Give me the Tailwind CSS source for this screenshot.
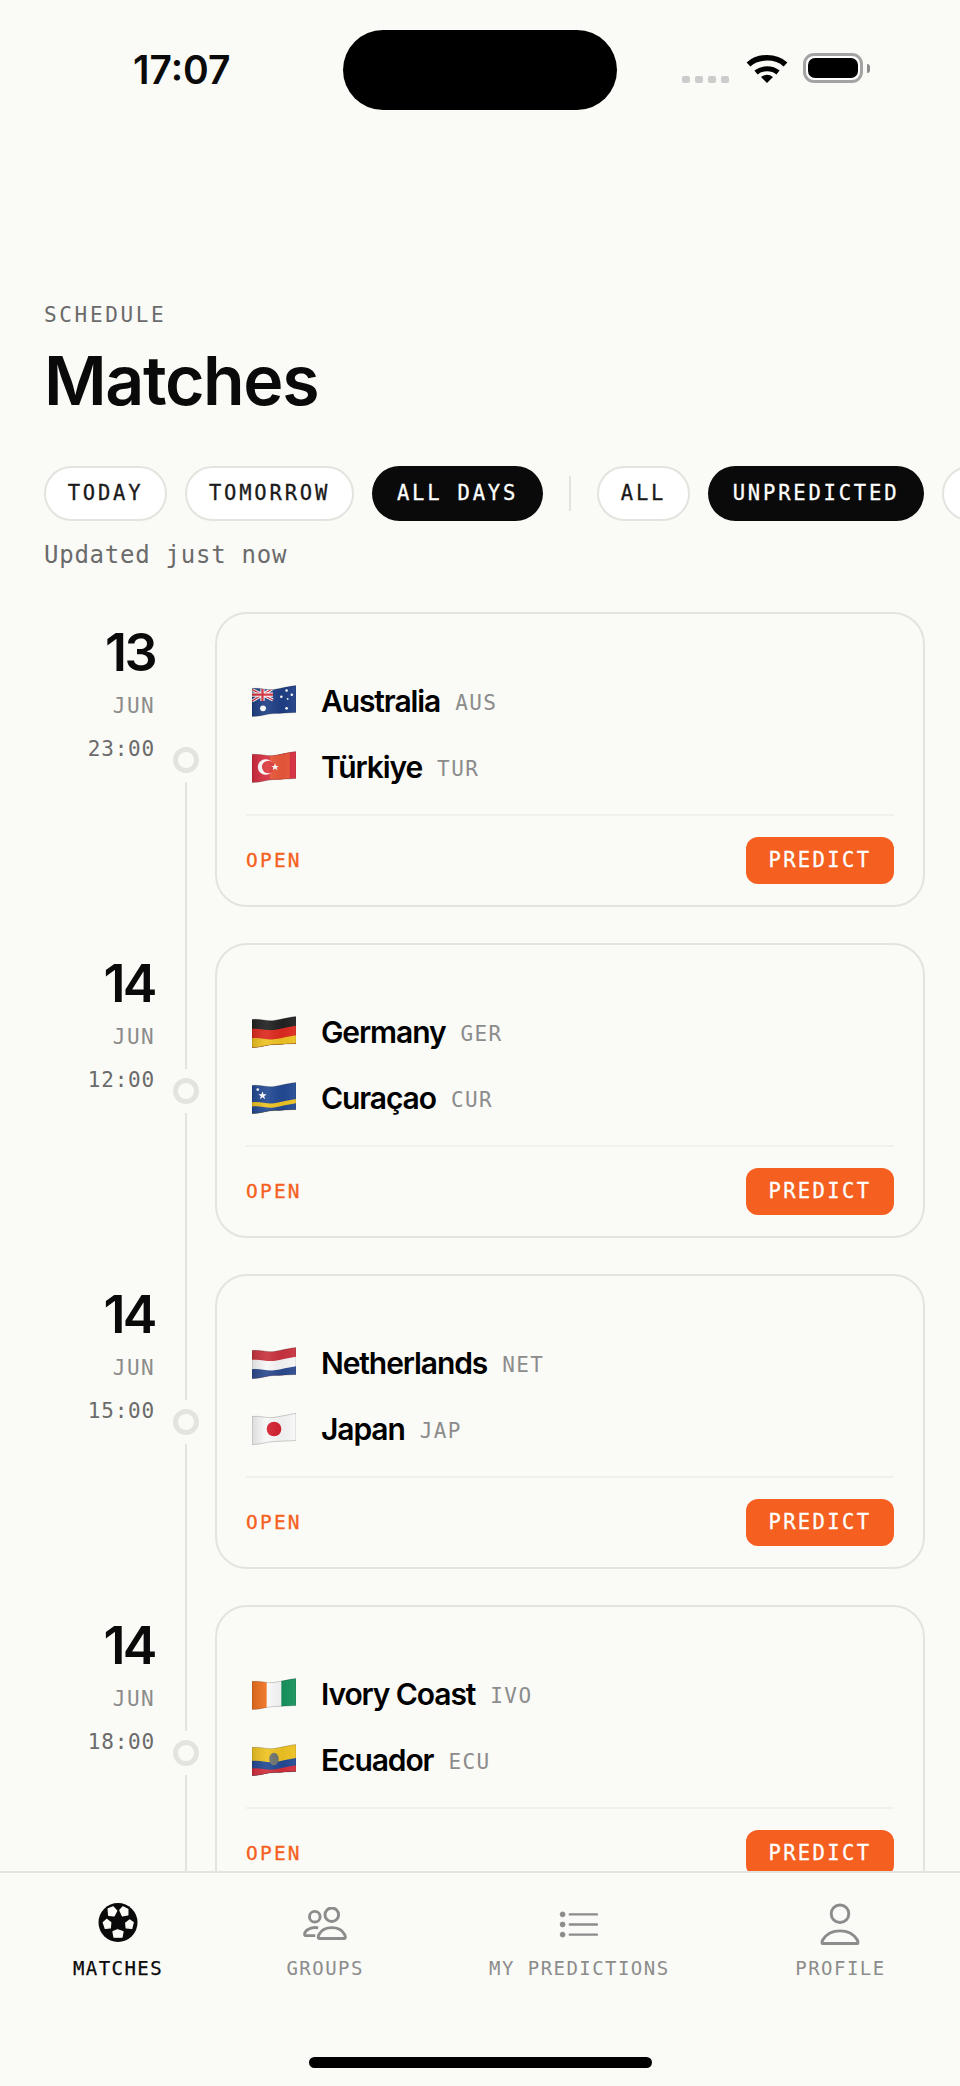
<!DOCTYPE html>
<html lang="en">
<head>
    <meta charset="UTF-8">
    <meta name="viewport" content="width=device-width, initial-scale=1.0">
    <title>Matches</title>
    <script src="https://cdn.jsdelivr.net/npm/@tailwindcss/browser@4"></script>
</head>
<body class="bg-[#fafaf6]">
    <!-- shared flag shape -->
    <svg class="absolute w-0 h-0">
        <defs>
            <path id="wave" d="M0 3C8 2 14 5 21 4S35 1 42 0V40H0Z"/>
            <clipPath id="flag"><path d="M0 3C8 2 14 5 21 4S35 1 42 0V26C35 26 28 27 21 27S8 30 0 30Z"/></clipPath>
            <linearGradient id="shade" x1="0" x2="1" y1="0" y2="0">
                <stop offset="0" stop-color="#000" stop-opacity=".12"/>
                <stop offset=".35" stop-color="#fff" stop-opacity=".08"/>
                <stop offset=".7" stop-color="#000" stop-opacity=".04"/>
                <stop offset="1" stop-color="#fff" stop-opacity=".06"/>
            </linearGradient>
            <g id="edge">
                <rect width="42" height="30" fill="url(#shade)" clip-path="url(#flag)"/>
                <path d="M0 3C8 2 14 5 21 4S35 1 42 0V26C35 26 28 27 21 27S8 30 0 30Z" fill="none" stroke="#000" stroke-opacity=".22" stroke-width=".8"/>
            </g>
        </defs>
    </svg>

    <div class="w-[960px] h-[2086px] flex flex-col overflow-hidden text-[#0a0a0a] font-['Inter',sans-serif]">
        <!-- status bar -->
        <div class="h-[130px] shrink-0 pt-[30px] pl-[133px] flex items-start">
            <div class="w-[210px] pt-[17px] text-[39px] leading-[46px] font-semibold">17:07</div>
            <div class="w-[274px] h-[80px] rounded-[40px] bg-black"></div>
            <div class="ml-[65px] flex gap-[5px] mt-[46px]">
                <span class="w-[8px] h-[7px] rounded-[2px] bg-[#cccccc]"></span>
                <span class="w-[8px] h-[7px] rounded-[2px] bg-[#cccccc]"></span>
                <span class="w-[8px] h-[7px] rounded-[2px] bg-[#cccccc]"></span>
                <span class="w-[8px] h-[7px] rounded-[2px] bg-[#cccccc]"></span>
            </div>
            <svg class="ml-[17px] mt-[23px]" width="42" height="30" viewBox="0 0 42 30">
                <path d="M2.5 11.5C12 2.500 30 2.500 39.500 11.500" fill="none" stroke="#000" stroke-width="5.500"/>
                <path d="M10 19.500C16 14.500 26 14.500 32 19.500" fill="none" stroke="#000" stroke-width="5"/>
                <path d="M15 24Q21 19.500 27 24L21 30Z" fill="#000"/>
            </svg>
            <div class="ml-[15px] mt-[23px] w-[60px] h-[30px] rounded-[11px] border-[3px] border-[#a3a3a3] p-[2px] bg-white">
                <div class="w-full h-full rounded-[7px] bg-black"></div>
            </div>
            <div class="ml-[4px] mt-[34px] w-[3px] h-[9px] rounded-r-[3px] bg-[#8c8c8c]"></div>
        </div>

        <!-- header -->
        <div class="shrink-0 pl-[44px] pt-[173px]">
            <div class="font-['DejaVu_Sans_Mono',monospace] text-[21px] leading-[24px] tracking-[2.65px] text-[#6b6b6b]">SCHEDULE</div>
            <h1 class="mt-[17px] text-[68px] leading-[72px] font-semibold tracking-[-1.4px] text-[#0a0a0a]">Matches</h1>
            <div class="mt-[50px] flex items-center gap-[18px] font-['DejaVu_Sans_Mono',monospace] text-[20.5px] tracking-[2.8px] whitespace-nowrap [-webkit-text-stroke:0.3px]">
                <button class="w-[123px] h-[55px] shrink-0 rounded-full border-2 border-[#e4e4df] bg-white text-[#1a1a1a]">TODAY</button>
                <button class="w-[169px] h-[55px] shrink-0 rounded-full border-2 border-[#e4e4df] bg-white text-[#1a1a1a]">TOMORROW</button>
                <button class="w-[171px] h-[55px] shrink-0 rounded-full bg-[#0a0a0a] text-white">ALL DAYS</button>
                <span class="w-[2px] h-[35px] shrink-0 mx-[8px] bg-[#e4e4df]"></span>
                <button class="w-[93px] h-[55px] shrink-0 rounded-full border-2 border-[#e4e4df] bg-white text-[#1a1a1a]">ALL</button>
                <button class="w-[216px] h-[55px] shrink-0 rounded-full bg-[#0a0a0a] text-white">UNPREDICTED</button>
                <span class="w-[170px] h-[55px] shrink-0 rounded-full border-2 border-[#e4e4df] bg-white"></span>
            </div>
            <div class="mt-[20px] font-['DejaVu_Sans_Mono',monospace] text-[24px] leading-[28px] tracking-[0.75px] text-[#6b6b6b]">Updated just now</div>
        </div>

        <!-- match timeline -->
        <main class="mt-[43px] flex-1 min-h-0 overflow-hidden pl-[44px] pr-[35px] flex flex-col gap-[36px]">

            <div class="flex shrink-0">
                <div class="w-[111px] shrink-0 flex flex-col items-end">
                    <div class="mt-[14px] text-[52px] leading-[54px] font-semibold tracking-[-2.5px]">13</div>
                    <div class="mt-[14px] font-['DejaVu_Sans_Mono',monospace] text-[21px] leading-[24px] tracking-[1.4px] text-[#8c8c8c]">JUN</div>
                    <div class="mt-[19px] font-['DejaVu_Sans_Mono',monospace] text-[21px] leading-[24px] tracking-[0.8px] text-[#6b6b6b]">23:00</div>
                </div>
                <div class="w-[60px] shrink-0 pl-[1px] flex flex-col items-center">
                    <span class="mt-[135px] w-[26px] h-[26px] shrink-0 rounded-full border-[5px] border-[#e4e4df]"></span>
                    <span class="mt-[9px] mb-[-162px] w-[2px] flex-1 bg-[#e4e4df]"></span>
                </div>
                <div class="flex-1 h-[295px] rounded-[32px] border-2 border-[#e4e4df] pt-[69px] px-[29px]">
                    <div class="flex items-center h-[36px] pl-[6px]">
                        <svg class="shrink-0" width="44" height="32" viewBox="0 0 42 30">
                            <g clip-path="url(#flag)">
                                <rect width="42" height="30" fill="#1f3f86"/>
                                <path d="M0 4L20 14M20 3L0 15" stroke="#fff" stroke-width="3"/>
                                <path d="M0 4L20 14M20 3L0 15" stroke="#d42e3c" stroke-width="1.200"/>
                                <path d="M10 3V15M0 9H20" stroke="#fff" stroke-width="4"/>
                                <path d="M10 3V15M0 9H20" stroke="#d42e3c" stroke-width="2.200"/>
                                <circle cx="10.500" cy="22" r="2.800" fill="#fff"/>
                                <circle cx="33" cy="5" r="1.200" fill="#fff"/>
                                <circle cx="28" cy="11" r="1.200" fill="#fff"/>
                                <circle cx="38" cy="9" r="1.200" fill="#fff"/>
                                <circle cx="34" cy="13" r=".9" fill="#fff"/>
                                <circle cx="33" cy="22" r="1.300" fill="#fff"/>
                            </g>
                            <use href="#edge"/>
                        </svg>
                        <span class="ml-[25px] text-[30px] leading-[36px] font-semibold tracking-[-1.1px] text-black">Australia</span>
                        <span class="ml-[15px] mt-[6px] font-['DejaVu_Sans_Mono',monospace] text-[21px] tracking-[1.4px] text-[#8c8c8c]">AUS</span>
                    </div>
                    <div class="flex items-center h-[36px] mt-[30px] pl-[6px]">
                        <svg class="shrink-0" width="44" height="32" viewBox="0 0 42 30">
                            <g clip-path="url(#flag)">
                                <rect width="42" height="30" fill="#d62d3f"/>
                                <rect x="17" width="19" height="30" fill="#e9583a"/>
                                <circle cx="13" cy="15" r="7.500" fill="#fff"/>
                                <circle cx="15.500" cy="15" r="6" fill="#dc3a3d"/>
                                <path d="M22 11.500L23 14H25.600L23.500 15.500L24.300 18L22 16.500L19.700 18L20.500 15.500L18.400 14H21Z" fill="#fff"/>
                            </g>
                            <use href="#edge"/>
                        </svg>
                        <span class="ml-[25px] text-[30px] leading-[36px] font-semibold tracking-[-1.1px] text-black">Türkiye</span>
                        <span class="ml-[15px] mt-[6px] font-['DejaVu_Sans_Mono',monospace] text-[21px] tracking-[1.4px] text-[#8c8c8c]">TUR</span>
                    </div>
                    <div class="mt-[29px] h-[2px] bg-[#f0f0ec]"></div>
                    <div class="pt-[21px] flex items-center justify-between">
                        <span class="font-['DejaVu_Sans_Mono',monospace] text-[19.5px] tracking-[2.2px] [-webkit-text-stroke:0.3px] text-[#f55f20]">OPEN</span>
                        <button class="w-[148px] h-[47px] rounded-[12px] bg-[#f55f20] text-white font-['DejaVu_Sans_Mono',monospace] text-[20.5px] tracking-[2.4px] [-webkit-text-stroke:0.3px]">PREDICT</button>
                    </div>
                </div>
            </div>

            <div class="flex shrink-0">
                <div class="w-[111px] shrink-0 flex flex-col items-end">
                    <div class="mt-[14px] text-[52px] leading-[54px] font-semibold tracking-[-2.5px]">14</div>
                    <div class="mt-[14px] font-['DejaVu_Sans_Mono',monospace] text-[21px] leading-[24px] tracking-[1.4px] text-[#8c8c8c]">JUN</div>
                    <div class="mt-[19px] font-['DejaVu_Sans_Mono',monospace] text-[21px] leading-[24px] tracking-[0.8px] text-[#6b6b6b]">12:00</div>
                </div>
                <div class="w-[60px] shrink-0 pl-[1px] flex flex-col items-center">
                    <span class="mt-[135px] w-[26px] h-[26px] shrink-0 rounded-full border-[5px] border-[#e4e4df]"></span>
                    <span class="mt-[9px] mb-[-162px] w-[2px] flex-1 bg-[#e4e4df]"></span>
                </div>
                <div class="flex-1 h-[295px] rounded-[32px] border-2 border-[#e4e4df] pt-[69px] px-[29px]">
                    <div class="flex items-center h-[36px] pl-[6px]">
                        <svg class="shrink-0" width="44" height="32" viewBox="0 0 42 30">
                            <g clip-path="url(#flag)">
                                <rect width="42" height="30" fill="#222222"/>
                                <use href="#wave" y="9" fill="#de2a1f"/>
                                <use href="#wave" y="18" fill="#eec322"/>
                            </g>
                            <use href="#edge"/>
                        </svg>
                        <span class="ml-[25px] text-[30px] leading-[36px] font-semibold tracking-[-1.1px] text-black">Germany</span>
                        <span class="ml-[15px] mt-[6px] font-['DejaVu_Sans_Mono',monospace] text-[21px] tracking-[1.4px] text-[#8c8c8c]">GER</span>
                    </div>
                    <div class="flex items-center h-[36px] mt-[30px] pl-[6px]">
                        <svg class="shrink-0" width="44" height="32" viewBox="0 0 42 30">
                            <g clip-path="url(#flag)">
                                <rect width="42" height="30" fill="#234a94"/>
                                <use href="#wave" y="16" fill="#eec322"/>
                                <use href="#wave" y="20" fill="#234a94"/>
                                <path d="M10 8.500L11 11.500H14L11.600 13.300L12.500 16.200L10 14.400L7.500 16.200L8.400 13.300L6 11.500H9Z" fill="#fff"/>
                                <circle cx="5.500" cy="7" r="1.300" fill="#fff"/>
                            </g>
                            <use href="#edge"/>
                        </svg>
                        <span class="ml-[25px] text-[30px] leading-[36px] font-semibold tracking-[-1.1px] text-black">Curaçao</span>
                        <span class="ml-[15px] mt-[6px] font-['DejaVu_Sans_Mono',monospace] text-[21px] tracking-[1.4px] text-[#8c8c8c]">CUR</span>
                    </div>
                    <div class="mt-[29px] h-[2px] bg-[#f0f0ec]"></div>
                    <div class="pt-[21px] flex items-center justify-between">
                        <span class="font-['DejaVu_Sans_Mono',monospace] text-[19.5px] tracking-[2.2px] [-webkit-text-stroke:0.3px] text-[#f55f20]">OPEN</span>
                        <button class="w-[148px] h-[47px] rounded-[12px] bg-[#f55f20] text-white font-['DejaVu_Sans_Mono',monospace] text-[20.5px] tracking-[2.4px] [-webkit-text-stroke:0.3px]">PREDICT</button>
                    </div>
                </div>
            </div>

            <div class="flex shrink-0">
                <div class="w-[111px] shrink-0 flex flex-col items-end">
                    <div class="mt-[14px] text-[52px] leading-[54px] font-semibold tracking-[-2.5px]">14</div>
                    <div class="mt-[14px] font-['DejaVu_Sans_Mono',monospace] text-[21px] leading-[24px] tracking-[1.4px] text-[#8c8c8c]">JUN</div>
                    <div class="mt-[19px] font-['DejaVu_Sans_Mono',monospace] text-[21px] leading-[24px] tracking-[0.8px] text-[#6b6b6b]">15:00</div>
                </div>
                <div class="w-[60px] shrink-0 pl-[1px] flex flex-col items-center">
                    <span class="mt-[135px] w-[26px] h-[26px] shrink-0 rounded-full border-[5px] border-[#e4e4df]"></span>
                    <span class="mt-[9px] mb-[-162px] w-[2px] flex-1 bg-[#e4e4df]"></span>
                </div>
                <div class="flex-1 h-[295px] rounded-[32px] border-2 border-[#e4e4df] pt-[69px] px-[29px]">
                    <div class="flex items-center h-[36px] pl-[6px]">
                        <svg class="shrink-0" width="44" height="32" viewBox="0 0 42 30">
                            <g clip-path="url(#flag)">
                                <rect width="42" height="30" fill="#c8333f"/>
                                <use href="#wave" y="9" fill="#f7f7f7"/>
                                <use href="#wave" y="18" fill="#2c4a8e"/>
                            </g>
                            <use href="#edge"/>
                        </svg>
                        <span class="ml-[25px] text-[30px] leading-[36px] font-semibold tracking-[-1.1px] text-black">Netherlands</span>
                        <span class="ml-[15px] mt-[6px] font-['DejaVu_Sans_Mono',monospace] text-[21px] tracking-[1.4px] text-[#8c8c8c]">NET</span>
                    </div>
                    <div class="flex items-center h-[36px] mt-[30px] pl-[6px]">
                        <svg class="shrink-0" width="44" height="32" viewBox="0 0 42 30">
                            <g clip-path="url(#flag)">
                                <rect width="42" height="30" fill="#f8f8f8"/>
                                <circle cx="21" cy="15" r="7" fill="#d3202f"/>
                            </g>
                            <use href="#edge"/>
                        </svg>
                        <span class="ml-[25px] text-[30px] leading-[36px] font-semibold tracking-[-1.1px] text-black">Japan</span>
                        <span class="ml-[15px] mt-[6px] font-['DejaVu_Sans_Mono',monospace] text-[21px] tracking-[1.4px] text-[#8c8c8c]">JAP</span>
                    </div>
                    <div class="mt-[29px] h-[2px] bg-[#f0f0ec]"></div>
                    <div class="pt-[21px] flex items-center justify-between">
                        <span class="font-['DejaVu_Sans_Mono',monospace] text-[19.5px] tracking-[2.2px] [-webkit-text-stroke:0.3px] text-[#f55f20]">OPEN</span>
                        <button class="w-[148px] h-[47px] rounded-[12px] bg-[#f55f20] text-white font-['DejaVu_Sans_Mono',monospace] text-[20.5px] tracking-[2.4px] [-webkit-text-stroke:0.3px]">PREDICT</button>
                    </div>
                </div>
            </div>

            <div class="flex shrink-0">
                <div class="w-[111px] shrink-0 flex flex-col items-end">
                    <div class="mt-[14px] text-[52px] leading-[54px] font-semibold tracking-[-2.5px]">14</div>
                    <div class="mt-[14px] font-['DejaVu_Sans_Mono',monospace] text-[21px] leading-[24px] tracking-[1.4px] text-[#8c8c8c]">JUN</div>
                    <div class="mt-[19px] font-['DejaVu_Sans_Mono',monospace] text-[21px] leading-[24px] tracking-[0.8px] text-[#6b6b6b]">18:00</div>
                </div>
                <div class="w-[60px] shrink-0 pl-[1px] flex flex-col items-center">
                    <span class="mt-[135px] w-[26px] h-[26px] shrink-0 rounded-full border-[5px] border-[#e4e4df]"></span>
                    <span class="mt-[9px] mb-[-162px] w-[2px] flex-1 bg-[#e4e4df]"></span>
                </div>
                <div class="flex-1 h-[295px] rounded-[32px] border-2 border-[#e4e4df] pt-[69px] px-[29px]">
                    <div class="flex items-center h-[36px] pl-[6px]">
                        <svg class="shrink-0" width="44" height="32" viewBox="0 0 42 30">
                            <g clip-path="url(#flag)">
                                <rect width="42" height="30" fill="#f8f8f8"/>
                                <rect width="14" height="30" fill="#f0701f"/>
                                <rect x="28" width="14" height="30" fill="#17935e"/>
                            </g>
                            <use href="#edge"/>
                        </svg>
                        <span class="ml-[25px] text-[30px] leading-[36px] font-semibold tracking-[-1.1px] text-black">Ivory Coast</span>
                        <span class="ml-[15px] mt-[6px] font-['DejaVu_Sans_Mono',monospace] text-[21px] tracking-[1.4px] text-[#8c8c8c]">IVO</span>
                    </div>
                    <div class="flex items-center h-[36px] mt-[30px] pl-[6px]">
                        <svg class="shrink-0" width="44" height="32" viewBox="0 0 42 30">
                            <g clip-path="url(#flag)">
                                <rect width="42" height="30" fill="#eec322"/>
                                <use href="#wave" y="13" fill="#234a94"/>
                                <use href="#wave" y="20" fill="#d42e3c"/>
                                <ellipse cx="21" cy="14" rx="4.500" ry="6" fill="#6f7470"/>
                            </g>
                            <use href="#edge"/>
                        </svg>
                        <span class="ml-[25px] text-[30px] leading-[36px] font-semibold tracking-[-1.1px] text-black">Ecuador</span>
                        <span class="ml-[15px] mt-[6px] font-['DejaVu_Sans_Mono',monospace] text-[21px] tracking-[1.4px] text-[#8c8c8c]">ECU</span>
                    </div>
                    <div class="mt-[29px] h-[2px] bg-[#f0f0ec]"></div>
                    <div class="pt-[21px] flex items-center justify-between">
                        <span class="font-['DejaVu_Sans_Mono',monospace] text-[19.5px] tracking-[2.2px] [-webkit-text-stroke:0.3px] text-[#f55f20]">OPEN</span>
                        <button class="w-[148px] h-[47px] rounded-[12px] bg-[#f55f20] text-white font-['DejaVu_Sans_Mono',monospace] text-[20.5px] tracking-[2.4px] [-webkit-text-stroke:0.3px]">PREDICT</button>
                    </div>
                </div>
            </div>
        </main>

        <!-- bottom nav -->
        <nav class="h-[215px] shrink-0 border-t-2 border-[#e4e4df] flex flex-col">
            <div class="h-[107px] pl-[73px] pr-[74px] flex justify-between font-['DejaVu_Sans_Mono',monospace] text-[19px] leading-[24px] tracking-[1.45px] text-[#8c8c8c] whitespace-nowrap">
                <a class="w-[90px] flex flex-col items-center text-[#0a0a0a] [-webkit-text-stroke:0.25px]">
                    <svg class="mt-[30px]" width="40" height="40" viewBox="0 0 40 40">
                        <circle cx="20" cy="20" r="20" fill="#0a0a0a"/>
                        <g fill="#fafaf6" stroke="#fafaf6" stroke-width="1.500" stroke-linejoin="round">
                            <path d="M10 6L15 4L18.500 8L16 13L10.500 12.500Z"/>
                            <path d="M22 7.500L25 4L30 6.500L30 12L24.500 13Z"/>
                            <path d="M5 20L8.500 17L12.500 20L12 25.500L7 26Z"/>
                            <path d="M28 20.500L32 17.500L35.500 20L34 26L28.500 25.500Z"/>
                            <path d="M15 29.500L19.500 27.500L25 29.500L24 35L16 35Z"/>
                        </g>
                    </svg>
                    <span class="mt-[14px]">MATCHES</span>
                </a>
                <a class="w-[77px] flex flex-col items-center">
                    <svg class="mt-[34px] mb-[1px]" width="46" height="35" viewBox="0 0 46 35" fill="none" stroke="#8c8c8c" stroke-width="3">
                        <circle cx="12.500" cy="10" r="5.500"/>
                        <circle cx="30" cy="8" r="7"/>
                        <path d="M16 21.500C9 20 2 24 2 28C2 29 3 29.500 4 29.500H13"/>
                        <path d="M17 32.500C15.500 32.500 16 30 17 28C22 19 38 19 43 28C44 30 44.500 32.500 43 32.500Z" stroke-linejoin="round"/>
                    </svg>
                    <span class="mt-[14px]">GROUPS</span>
                </a>
                <a class="w-[184px] flex flex-col items-center">
                    <svg class="mt-[38px] mb-[7px]" width="40" height="28" viewBox="0 0 40 28" fill="#8c8c8c" stroke="#8c8c8c">
                        <circle cx="3" cy="3.500" r="2.500"/>
                        <circle cx="3" cy="14" r="2.500"/>
                        <circle cx="3" cy="24.500" r="2.500"/>
                        <path d="M10.500 3.500H38.500M10.500 14H38.500M10.500 24.500H38.500" stroke-width="2.500" stroke-linecap="round"/>
                    </svg>
                    <span class="mt-[11px]">MY PREDICTIONS</span>
                </a>
                <a class="w-[91px] flex flex-col items-center">
                    <svg class="mt-[30px]" width="40" height="44" viewBox="0 0 40 44" fill="none" stroke="#8c8c8c" stroke-width="3">
                        <circle cx="20" cy="11" r="9"/>
                        <path d="M3 41.500C1 41.500 1.500 39 2.500 37.500C10 25.500 30 25.500 37.500 37.500C38.500 39 39 41.500 37 41.500Z" stroke-linejoin="round"/>
                    </svg>
                    <span class="mt-[10px]">PROFILE</span>
                </a>
            </div>
            <div class="mt-[77px] mx-auto w-[343px] h-[11px] rounded-full bg-black"></div>
        </nav>
    </div>
</body>
</html>
